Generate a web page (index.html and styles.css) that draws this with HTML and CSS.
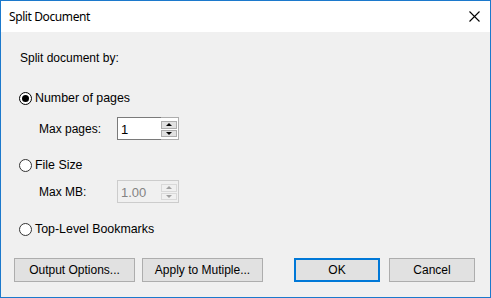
FILE: index.html
```html
<!DOCTYPE html>
<html lang="en">
<head>
    <meta charset="UTF-8">
    <title>Split Document</title>
    <link rel="stylesheet" href="styles.css">
</head>
<body>
    <div class="window">
        <!-- Title Bar -->
        <div class="titlebar">
            <span class="title">Split Document</span>
            <svg class="close" width="11" height="11" viewBox="0 0 11 11">
                <path d="M0.5 0.5 L10.5 10.5 M10.5 0.5 L0.5 10.5" stroke="#000" stroke-width="1.1" fill="none"/>
            </svg>
        </div>

        <!-- Dialog Content -->
        <div class="content">
            <p class="caption">Split document by:</p>

            <label class="radio-row first">
                <span class="radio checked"></span>
                <span>Number of pages</span>
            </label>
            <div class="sub-row pages">
                <span class="sub-label">Max pages:</span>
                <div class="spin">
                    <div class="spin-field">1</div>
                    <div class="spin-btns">
                        <div class="spin-btn"><span class="arrow up"></span></div>
                        <div class="spin-btn"><span class="arrow down"></span></div>
                    </div>
                </div>
            </div>

            <label class="radio-row second">
                <span class="radio"></span>
                <span>File Size</span>
            </label>
            <div class="sub-row size">
                <span class="sub-label">Max MB:</span>
                <div class="spin disabled">
                    <div class="spin-field">1.00</div>
                    <div class="spin-btns">
                        <div class="spin-btn"><span class="arrow up"></span></div>
                        <div class="spin-btn"><span class="arrow down"></span></div>
                    </div>
                </div>
            </div>

            <label class="radio-row third">
                <span class="radio"></span>
                <span>Top-Level Bookmarks</span>
            </label>
        </div>

        <!-- Button Bar -->
        <div class="buttons">
            <div class="btn-group">
                <button class="btn wide">Output Options...</button>
                <button class="btn wide">Apply to Mutiple...</button>
            </div>
            <div class="btn-group right">
                <button class="btn default">OK</button>
                <button class="btn">Cancel</button>
            </div>
        </div>
    </div>
</body>
</html>
```

FILE: styles.css
```css
/* General Reset */
* {
    box-sizing: border-box;
    margin: 0;
    padding: 0;
}

body {
    width: 491px;
    height: 298px;
    overflow: hidden;
    font-family: "Liberation Sans", Arial, sans-serif;
    font-size: 12px;
    color: #000;
    background: #f0f0f0;
}

/* Window Frame */
.window {
    width: 491px;
    height: 298px;
    border: 1px solid #1c79cc;
    background: #f0f0f0;
    display: flex;
    flex-direction: column;
}

/* Title Bar */
.titlebar {
    height: 31px;
    background: #fff;
    display: flex;
    align-items: center;
    justify-content: space-between;
    padding: 0 10px 0 8px;
}

.title {
    font-family: "Noto Sans", "Open Sans", sans-serif;
    font-size: 12px;
    letter-spacing: -0.4px;
}

/* Content Area */
.content {
    padding-left: 18px;
    display: flex;
    flex-direction: column;
}

.caption {
    margin-top: 19px;
    line-height: 14px;
    padding-left: 1px;
}

/* Radio Rows */
.radio-row {
    display: flex;
    align-items: center;
    gap: 3px;
    height: 14px;
    line-height: 14px;
    font-size: 12.4px;
}

.radio-row.first { margin-top: 26px; }
.radio-row.second { margin-top: 18px; }
.radio-row.third { margin-top: 19px; }

.radio {
    width: 13px;
    height: 13px;
    border: 1px solid #333;
    border-radius: 50%;
    background: #fff;
    position: relative;
}

.radio.checked {
    border-color: #000;
}

.radio.checked::after {
    content: "";
    position: absolute;
    top: 2px;
    left: 2px;
    width: 7px;
    height: 7px;
    border-radius: 50%;
    background: #000;
}

/* Sub Rows with Spin Boxes */
.sub-row {
    display: flex;
    align-items: center;
    padding-left: 20px;
}

.sub-row.pages { margin-top: 12px; }
.sub-row.size { margin-top: 8px; }

.sub-label {
    width: 78px;
}

.spin {
    display: flex;
    width: 62px;
    height: 23px;
}

.spin-field {
    width: 44px;
    border: 1px solid #7a7a7a;
    border-right: none;
    background: #fff;
    padding: 4px 0 0 3px;
    font-size: 13px;
}

.spin-btns {
    width: 18px;
    border: 1px solid #adadad;
    border-left: none;
    background: #fff;
    padding: 3px 1px 2px 0;
    display: flex;
    flex-direction: column;
    gap: 1px;
}

.spin-btn {
    flex: 1;
    background: #e1e1e1;
    border: 1px solid #adadad;
    display: flex;
    align-items: center;
    justify-content: center;
}

.arrow {
    width: 0;
    height: 0;
    border-left: 3px solid transparent;
    border-right: 3px solid transparent;
}

.arrow.up { border-bottom: 3px solid #000; }
.arrow.down { border-top: 3px solid #000; }

/* Disabled Spin Box */
.spin.disabled .spin-field {
    border-color: #cccccc;
    background: #f0f0f0;
    color: #838383;
}

.spin.disabled .spin-btns {
    border-color: #cccccc;
    background: #f0f0f0;
}

.spin.disabled .spin-btn {
    background: #f0f0f0;
    border-color: #d9d9d9;
}

.spin.disabled .arrow.up { border-bottom-color: #a0a0a0; }
.spin.disabled .arrow.down { border-top-color: #a0a0a0; }

/* Button Bar */
.buttons {
    display: flex;
    justify-content: space-between;
    margin-top: 22px;
    padding: 0 15px 0 13px;
}

.btn-group {
    display: flex;
    gap: 7px;
}

.btn-group.right {
    gap: 9px;
}

.btn {
    width: 86px;
    height: 24px;
    background: #e1e1e1;
    border: 1px solid #adadad;
    font-family: "Liberation Sans", Arial, sans-serif;
    font-size: 12px;
    color: #000;
}

.btn.wide {
    width: 121px;
}

.btn.default {
    border: 2px solid #0078d7;
}
```
